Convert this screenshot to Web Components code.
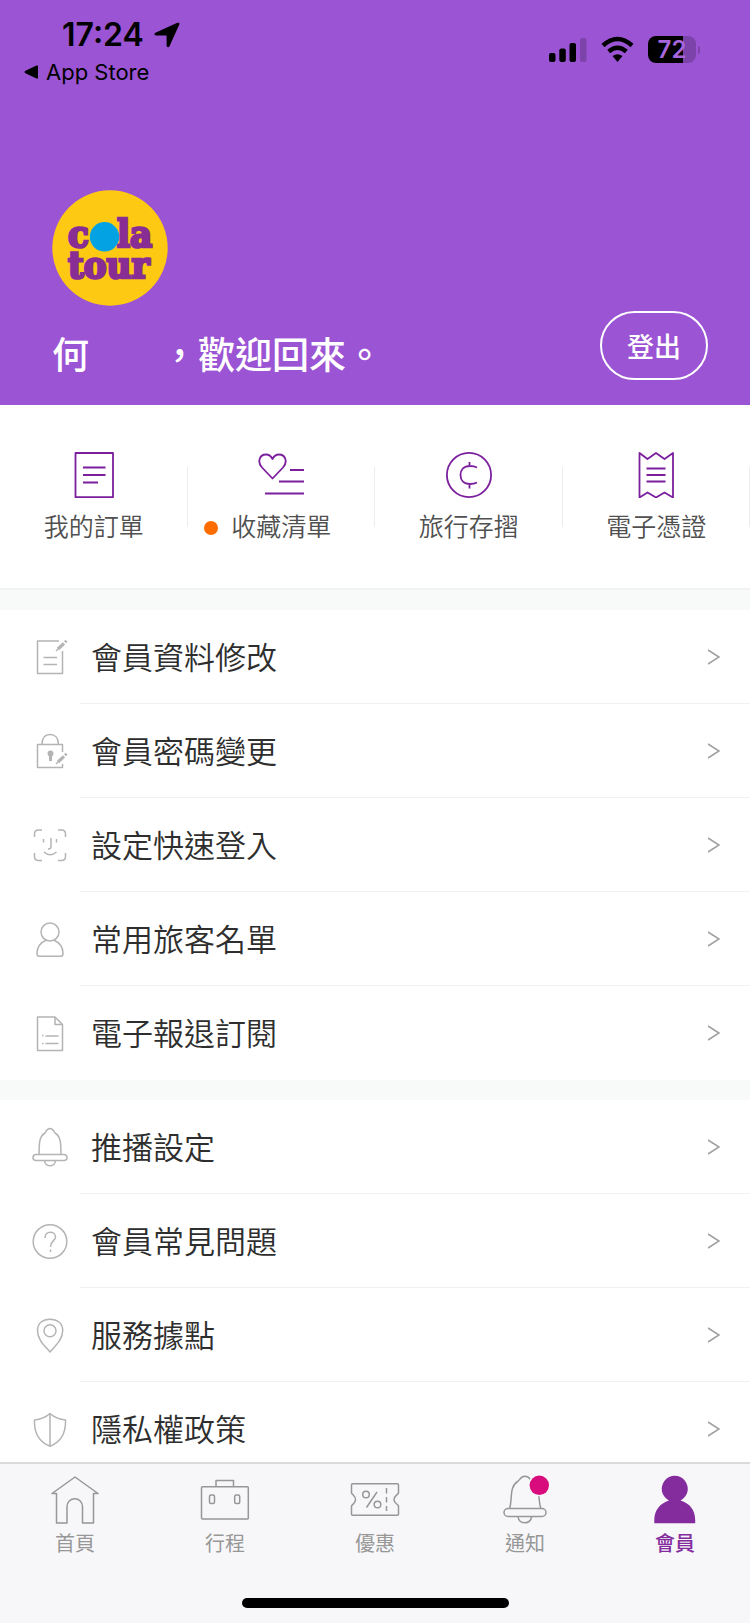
<!DOCTYPE html>
<html lang="zh-Hant">
<head>
<meta charset="utf-8">
<meta name="viewport" content="width=device-width, initial-scale=1">
<title>會員</title>
<style>
  body { margin: 0; background: #fff; font-family: "Noto Sans CJK TC", "Noto Sans", sans-serif; color: #2e2e2e; }
</style>
</head>
<body>
<member-app>
  <member-header slot="header" name="何"></member-header>
  <quick-links slot="content">
    <quick-item icon="order">我的訂單</quick-item>
    <quick-item icon="favorites" dot>收藏清單</quick-item>
    <quick-item icon="coin">旅行存摺</quick-item>
    <quick-item icon="voucher">電子憑證</quick-item>
  </quick-links>
  <menu-group slot="content">
    <menu-item icon="edit">會員資料修改</menu-item>
    <menu-item icon="lock">會員密碼變更</menu-item>
    <menu-item icon="face">設定快速登入</menu-item>
    <menu-item icon="person">常用旅客名單</menu-item>
    <menu-item icon="paper">電子報退訂閱</menu-item>
  </menu-group>
  <menu-group slot="content">
    <menu-item icon="bell">推播設定</menu-item>
    <menu-item icon="help">會員常見問題</menu-item>
    <menu-item icon="pin">服務據點</menu-item>
    <menu-item icon="shield">隱私權政策</menu-item>
  </menu-group>
  <tab-bar slot="tabs">
    <tab-item icon="home">首頁</tab-item>
    <tab-item icon="case">行程</tab-item>
    <tab-item icon="ticket">優惠</tab-item>
    <tab-item icon="notice">通知</tab-item>
    <tab-item icon="member" active>會員</tab-item>
  </tab-bar>
</member-app>

<script>
const ICONS = {
  /* shortcuts, 46 x 46 */
  order: [46, '<path d="M4.500 1H42V45.200H4.500ZM12 15.500H34.500M12 23H34.500M12 30.500H27"/>'],
  favorites: [46, '<path d="M14.500 26.500L4 15.500C-1 10 1.500 2.500 8 2.500C11.500 2.500 13.500 5 14.500 7C15.500 5 17.500 2.500 21 2.500C27.500 2.500 30 10 25 15.500ZM32 18H46M21 29.500H46M7 41.500H46"/>'],
  coin: [46, '<circle cx="23" cy="23" r="22.100"/><path d="M31 15.500C28 14 26 14 24 14C17.500 14 14.500 18 14.500 23C14.500 28 17.500 32 24 32C26 32 28 32 31 30.500M23.500 10V14M23.500 32V36.500"/>'],
  voucher: [46, '<path d="M6.500 1L14.500 7L23 1L31.500 7L40 1V45.500L31.500 40.500L23 45.500L14.500 40.500L6.500 45.500ZM13.500 16.500H32.500M13.500 23H32.500M13.500 29.500H32.500"/>'],
  /* menu rows, 40 x 40 */
  edit: [40, '<path d="M29 4H7.500V36.500H32.500V14M13.500 20.500H27M13.500 27.500H27"/><path d="M28 12L34 6.300" stroke-width="3.200"/><path d="M26 14L28 12"/><path d="M35 5.300L36.500 3.800" stroke-width="2.800"/>'],
  lock: [40, '<path d="M32.500 21V13.500H7.500V36.500H32.500V33M12 13.500C12 7 15 3.500 20 3.500C25 3.500 28.500 7 28.500 13.500"/><path d="M20.500 23V30" stroke-width="3"/><circle cx="20.500" cy="22.500" r="2.200" fill="currentColor"/><path d="M28 31L34 25.300" stroke-width="3.200"/><path d="M26 33L28 31"/><path d="M35 24.300L36.500 22.800" stroke-width="2.800"/>'],
  face: [40, '<path d="M4.500 12V9Q4.500 5 8.500 5H12M28 5H31.500Q35.500 5 35.500 9V12M35.500 28V31.500Q35.500 35.500 31.500 35.500H28M12 35.500H8.500Q4.500 35.500 4.500 31.500V28M13.500 14V17.500M26.500 14V17.500M21 13V22Q21 24 18 24M14 27Q20 32.500 26.500 27"/>'],
  person: [40, '<circle cx="20" cy="13" r="9"/><path d="M16 21.200C10.500 23.500 7 28 7 34.500Q7 37.300 9 37.300H31Q33 37.300 33 34.500C33 28 29.500 23.500 24 21.200"/>'],
  paper: [40, '<path d="M25 4H7.500V37.500H32.500V11.500L25 4V11.500H32.500M15.500 23H28.500M15.500 30.500H28.500M12 22.500H13.500M12 30.500H13.500"/>'],
  bell: [40, '<path d="M9 27.500C9.500 20 8 10 15 6C16 5 16.500 1.500 20 1.500C23.500 1.500 24 5 25 6C32 10 30.500 20 31 27.500M14.500 33.500C15 37 17 38.800 20 38.800C23 38.800 25 37 25.500 33.500"/><rect x="3" y="27.500" width="34" height="6" rx="3"/>'],
  help: [40, '<circle cx="20" cy="20.500" r="16.800"/><path d="M15 17C15 9 25.500 10 25.500 16C25.500 20 20.500 19.500 20.500 26M20.500 28.500V31"/>'],
  pin: [40, '<path d="M20 37C15 31 7.500 25 7.500 15.500C7.500 8 13 4.200 20 4.200C27 4.200 32.700 8 32.700 15.500C32.700 25 25 31 20 37Z"/><circle cx="20" cy="15.700" r="6"/>'],
  shield: [40, '<path d="M20 4.500C15 9 10 10.500 4.500 11C4 22 7 32 20 37.300C33 32 36 22 35.500 11C30 10.500 25 9 20 4.500ZM20 4.500V37"/>'],
  /* tabs, 50 x 50 */
  home: [50, '<path d="M6.500 18.500H2L25 2L48 18.500H43.500V48H32.500V31.500A7.700 7.700 0 0 0 17 31.500V48H6.500Z"/>'],
  case: [50, '<path d="M2.500 11.700H47.500Q48.300 11.700 48.300 12.500V43.300Q48.300 44 47.500 44H2.500Q1.500 44 1.500 43V12.700Q1.500 11.700 2.500 11.700ZM16 11.700V5.500H33.500V11.700"/><rect x="9.500" y="20" width="5" height="8.500" rx="1.500"/><rect x="34.700" y="20" width="5" height="8.500" rx="1.500"/>'],
  ticket: [50, '<path d="M2.500 8.700H47.500Q48.500 8.700 48.500 10V18C47 20.500 44 21 44 24.700C44 28 47 28.500 48.500 31V39.300Q48.500 40.300 47.500 40.300H2.500Q1.500 40.300 1.500 39.300V31C3 28.500 5.500 28 5.500 24.700C5.500 21 3 20.500 1.500 18V10Q1.500 8.700 2.500 8.700ZM27 17L16.500 32.500"/><circle cx="16" cy="19.500" r="3.300"/><circle cx="27.500" cy="29.500" r="3.300"/><path d="M36.500 13V36" stroke-dasharray="5.500 3.500"/>'],
  notice: [50, '<path d="M9.700 33C12.500 25 9 12 17.500 6.500C20 5.500 20 1.300 25 1.300C30 1.300 30 5.500 32.500 6.500C40.500 12 38 25 40.700 33M18 41.500C18.500 45.500 21 47.700 24.800 47.700C28.500 47.700 31 45.500 31.700 41.500"/><rect x="4" y="33.500" width="42" height="8" rx="4"/><circle cx="39.300" cy="10.300" r="11" fill="#f7f7fa" stroke="none"/><circle cx="39.300" cy="10.300" r="9.700" fill="#d80c7c" stroke="none"/>'],
  member: [50, '<path d="M19 25.500A13 13 0 1 1 30.500 25.500C40 28.500 45.200 35 45.200 45V48.200H4.300V45C4.300 35 10 28.500 19 25.500Z" fill="currentColor" stroke="none"/>']
};

const define = (name, css, html) => {
  customElements.define(name, class extends HTMLElement {
    constructor() {
      super();
      this.attachShadow({ mode: 'open' });
    }
    connectedCallback() {
      this.shadowRoot.innerHTML = `<style>*{box-sizing:border-box}${css}</style>${typeof html === 'function' ? html(this) : html}`;
    }
  });
};

define('line-icon',
  `:host { display: block; flex: none; }
   svg { display: block; fill: none; stroke: currentColor; stroke-width: var(--stroke, 1.3); stroke-linejoin: round; }`,
  el => {
    const [size, shape] = ICONS[el.getAttribute('name')];
    return `<svg width="${size}" height="${size}" viewBox="0 0 ${size} ${size}" aria-hidden="true">${shape}</svg>`;
  });

define('member-app',
  `:host { display: flex; flex-direction: column; height: 100vh; }
   main { flex: 1; min-height: 0; overflow-y: auto; scrollbar-width: none; }`,
  `<slot name="header"></slot><main><slot name="content"></slot></main><slot name="tabs"></slot>`);

define('status-bar',
  `:host { display: flex; justify-content: space-between; color: #000; font-family: Inter, sans-serif; padding: 16px 50px 0 24px; }
   .time { display: flex; align-items: center; gap: 10px; padding-left: 38px; font-size: 32px; line-height: 38px; font-weight: 600; }
   .back { display: flex; align-items: center; gap: 8px; color: inherit; text-decoration: none; font-size: 22px; line-height: 26px; margin-top: 5px; font-weight: 400; }
   .state { display: flex; align-items: center; gap: 14px; height: 27px; margin-top: 20px; }
   .battery { display: flex; align-items: center; gap: 2px; }
   .cell { width: 48px; height: 27px; border-radius: 8px; background: linear-gradient(90deg, #000 73%, #7c44aa 73%); color: #a866dc; font-size: 24px; line-height: 27px; font-weight: 600; text-align: center; }
   .nub { width: 2px; height: 8px; border-radius: 0 2px 2px 0; background: #7c44aa; }
   svg { display: block; }`,
  `<div>
     <div class="time"><span>17:24</span>
       <svg width="26" height="26" viewBox="0 0 26 26"><path d="M24.500 .8Q26 1 25.200 2.800L15.500 24.300Q14 26.500 12.600 24V13.500H2Q-.8 12.500 1.400 10.800L22.800 1Z"/></svg>
     </div>
     <a class="back" href="#"><svg width="14" height="14" viewBox="0 0 14 14"><path d="M1 6Q0 7 1 8L12.500 13.500Q14 14 14 12.500V1.500Q14 0 12.500 .5Z"/></svg>App Store</a>
   </div>
   <div class="state">
     <svg width="38" height="27" viewBox="0 0 38 27"><rect y="17" width="6.500" height="9" rx="2"/><rect x="10.300" y="12.500" width="6.500" height="13.500" rx="2"/><rect x="20.500" y="7" width="6.500" height="19" rx="2"/><rect x="31" y="2" width="6.500" height="24" rx="2" fill="#7c44aa"/></svg>
     <svg width="33" height="27" viewBox="0 0 33 27"><path d="M2 9.500Q16.500 -3.500 31 9.500M7.700 15.500Q16.500 8 25.300 15.500" fill="none" stroke="#000" stroke-width="4.500"/><path d="M11.500 20Q16.500 16.500 21.500 20L16.500 26Z"/></svg>
     <div class="battery"><div class="cell">72</div><div class="nub"></div></div>
   </div>`);

define('brand-logo',
  `:host { display: block; width: 116px; height: 116px; }
   svg { display: block; }
   text { font: 700 38px "DejaVu Serif Condensed", "DejaVu Serif", serif; font-stretch: condensed; fill: #872d93; stroke: #872d93; stroke-width: 2.6; }`,
  `<svg width="116" height="116" viewBox="0 0 116 116" role="img" aria-label="cola tour">
     <circle cx="58" cy="58" r="57.700" fill="#fec913"/>
     <text x="16" y="57">c</text><text x="65" y="57">la</text><text x="16" y="88">tour</text>
     <circle cx="52.500" cy="46.800" r="14.700" fill="#03a2e3"/>
   </svg>`);

define('member-header',
  `:host { display: block; flex: none; background: #9b54d4; color: #fff; }
   status-bar { height: 190px; }
   .row { display: flex; justify-content: space-between; align-items: flex-end; padding: 0 42px 25px 52px; }
   brand-logo { margin-bottom: 20px; }
   h1 { margin: 0; font-size: 37px; line-height: 54px; font-weight: 500; }
   .name { margin-right: 72px; }
   button { width: 108px; height: 69px; border: 2px solid #fff; border-radius: 35px; background: none; color: inherit; font: inherit; font-size: 27px; font-weight: 500; padding: 0; }`,
  el => `<status-bar></status-bar>
   <div class="row">
     <div><brand-logo></brand-logo><h1><span class="name">${el.getAttribute('name')}</span>，歡迎回來。</h1></div>
     <button type="button">登出</button>
   </div>`);

define('quick-links',
  `:host { display: block; border-bottom: 2px solid #f1f3f3; background: #fff; }
   nav { display: grid; grid-template-columns: repeat(4, 1fr); padding: 47px 0 46px; }`,
  `<nav><slot></slot></nav>`);

define('quick-item',
  `:host { display: block; background: linear-gradient(#ededed, #ededed) no-repeat right 15px / 1px 60px; }
   a { display: flex; flex-direction: column; align-items: center; gap: 10px; color: #505050; text-decoration: none; font-size: 25px; line-height: 34px; font-weight: 350; }
   line-icon { color: #7b1f9c; --stroke: 1.8; }
   .label { position: relative; }
   .dot { position: absolute; right: 100%; top: 13px; width: 14px; height: 14px; margin-right: 13px; border-radius: 50%; background: #ff6d00; }`,
  el => `<a href="#"><line-icon name="${el.getAttribute('icon')}"></line-icon><span class="label">${el.hasAttribute('dot') ? '<i class="dot"></i>' : ''}<slot></slot></span></a>`);

define('menu-group',
  `:host { display: block; border-top: 20px solid #f8fafa; background: #fff; }`,
  `<slot></slot>`);

define('menu-item',
  `:host { display: block; }
   a { display: flex; align-items: center; height: 94px; padding-left: 30px; color: #2e2e2e; text-decoration: none; }
   line-icon { color: #b4b4b4; margin-right: 10px; --stroke: 1.5; }
   .body { flex: 1; display: flex; align-items: center; justify-content: space-between; height: 100%; padding: 0 30px 0 11px; border-bottom: 1px solid #f1f1f1; font-size: 31px; line-height: 44px; font-weight: 350; }
   .label { padding-bottom: 2px; }
   :host(:last-child) .body { border-color: transparent; }
   svg { display: block; }`,
  el => `<a href="#"><line-icon name="${el.getAttribute('icon')}"></line-icon><span class="body"><span class="label"><slot></slot></span><svg width="12" height="16" viewBox="0 0 12 16" fill="none" stroke="#a0a0a0" stroke-width="1.500"><path d="M0 1L11 8L0 15"/></svg></span></a>`);

define('tab-bar',
  `:host { display: block; flex: none; border-top: 2px solid #dadadd; background: #f7f7fa; padding: 11px 0 15px; }
   nav { display: grid; grid-template-columns: repeat(5, 1fr); }
   .indicator { width: 267px; height: 10px; border-radius: 5px; background: #000; margin: 41px auto 0; }`,
  `<nav><slot></slot></nav><div class="indicator"></div>`);

define('tab-item',
  `:host { display: block; color: #979797; }
   :host([active]) { color: #842b9e; font-weight: 500; }
   a { display: flex; flex-direction: column; align-items: center; gap: 4px; color: inherit; text-decoration: none; font-size: 20px; line-height: 28px; }
   line-icon { --stroke: 1.5; }`,
  el => `<a href="#"${el.hasAttribute('active') ? ' aria-current="page"' : ''}><line-icon name="${el.getAttribute('icon')}"></line-icon><span><slot></slot></span></a>`);
</script>
</body>
</html>
